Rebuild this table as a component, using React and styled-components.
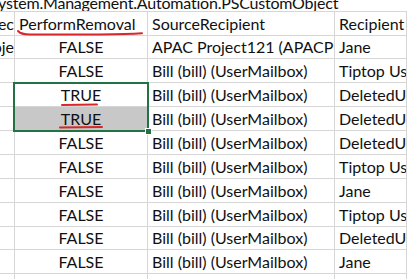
import React from 'react'
import styled, { createGlobalStyle } from 'styled-components'

const GlobalStyle = createGlobalStyle`
  * { box-sizing: border-box; }
  html, body { margin: 0; padding: 0; background: #fff; }
  body { font-family: Lato, 'Liberation Sans', sans-serif; }
`

const GRID = '#d6d6d6'

const Sheet = styled.div`
  position: relative;
  width: 407px;
  height: 279px;
  overflow: hidden;
  background: #fff;
  font-size: 16px;
  color: #111;
`

const TitleRow = styled.div`
  display: flex;
  align-items: flex-end;
  height: 12px;
  overflow: hidden;
  border-bottom: 1px solid ${GRID};
  white-space: nowrap;
  line-height: 16px;
`

const TitleText = styled.span`
  margin-left: -10px;
  letter-spacing: -0.2px;
`

const Row = styled.div`
  display: grid;
  grid-template-columns: 15px 133px 187px 1fr;
  height: ${(p) => p.$h}px;
  border-bottom: 1px solid ${GRID};
`

const Cell = styled.div`
  display: flex;
  align-items: flex-end;
  justify-content: ${(p) =>
    p.$align === 'center' ? 'center' : p.$align === 'right' ? 'flex-end' : 'flex-start'};
  padding: 0 0 3px ${(p) => (p.$align === 'left' ? 4 : 0)}px;
  border-right: 1px solid ${GRID};
  overflow: hidden;
  white-space: nowrap;
  line-height: 16px;
  background: ${(p) => (p.$shade ? '#c8c8c8' : 'transparent')};
`

const Selection = styled.div`
  position: absolute;
  left: 13px;
  top: 82px;
  width: 136px;
  height: 50px;
  border: 2px solid #217346;
  pointer-events: none;
`

const FillHandle = styled.div`
  position: absolute;
  right: -5px;
  bottom: -5px;
  width: 7px;
  height: 7px;
  background: #217346;
  border: 1px solid #fff;
`

const Marks = styled.svg`
  position: absolute;
  left: 0;
  top: 0;
  pointer-events: none;
`

const header = { key: 'Spec', flag: 'PerformRemoval', src: 'SourceRecipient', rcpt: 'Recipient' }

const rows = [
  { h: 23, key: 'Proje', flag: 'FALSE', src: 'APAC Project121 (APACProject121)', rcpt: 'Jane' },
  { h: 24, flag: 'FALSE', src: 'Bill (bill) (UserMailbox)', rcpt: 'Tiptop User' },
  { h: 24, flag: 'TRUE', src: 'Bill (bill) (UserMailbox)', rcpt: 'DeletedUser' },
  { h: 24, flag: 'TRUE', src: 'Bill (bill) (UserMailbox)', rcpt: 'DeletedUser', shade: true },
  { h: 24, flag: 'FALSE', src: 'Bill (bill) (UserMailbox)', rcpt: 'DeletedUser' },
  { h: 24, flag: 'FALSE', src: 'Bill (bill) (UserMailbox)', rcpt: 'Tiptop User' },
  { h: 24, flag: 'FALSE', src: 'Bill (bill) (UserMailbox)', rcpt: 'Jane' },
  { h: 24, flag: 'FALSE', src: 'Bill (bill) (UserMailbox)', rcpt: 'Tiptop User' },
  { h: 23, flag: 'FALSE', src: 'Bill (bill) (UserMailbox)', rcpt: 'DeletedUser' },
  { h: 24, flag: 'FALSE', src: 'Bill (bill) (UserMailbox)', rcpt: 'Jane' },
  { h: 24 },
]

export default function App() {
  return (
    <>
      <GlobalStyle />
      <Sheet>
        <TitleRow>
          <TitleText>System.Management.Automation.PSCustomObject</TitleText>
        </TitleRow>
        <Row $h={24}>
          <Cell $align="right">{header.key}</Cell>
          <Cell $align="left">{header.flag}</Cell>
          <Cell $align="left">{header.src}</Cell>
          <Cell $align="left">{header.rcpt}</Cell>
        </Row>
        {rows.map((r, i) => (
          <Row key={i} $h={r.h}>
            <Cell $align="right">{r.key}</Cell>
            <Cell $align="center" $shade={r.shade}>{r.flag}</Cell>
            <Cell $align="left">{r.src}</Cell>
            <Cell $align="left">{r.rcpt}</Cell>
          </Row>
        ))}

        <Selection>
          <FillHandle />
        </Selection>

        {/* red pen underlines */}
        <Marks width="407" height="279" viewBox="0 0 407 279">
          <g fill="none" stroke="#d8262b" strokeWidth="2" strokeLinecap="round">
            <path d="M18 31 Q21 34.5 30 34.5 L100 34.5 Q128 34.2 142 33.3" />
            <path d="M62 105 L97 104.5" />
            <path d="M60 127.5 Q80 127 102 127" />
          </g>
        </Marks>
      </Sheet>
    </>
  )
}
